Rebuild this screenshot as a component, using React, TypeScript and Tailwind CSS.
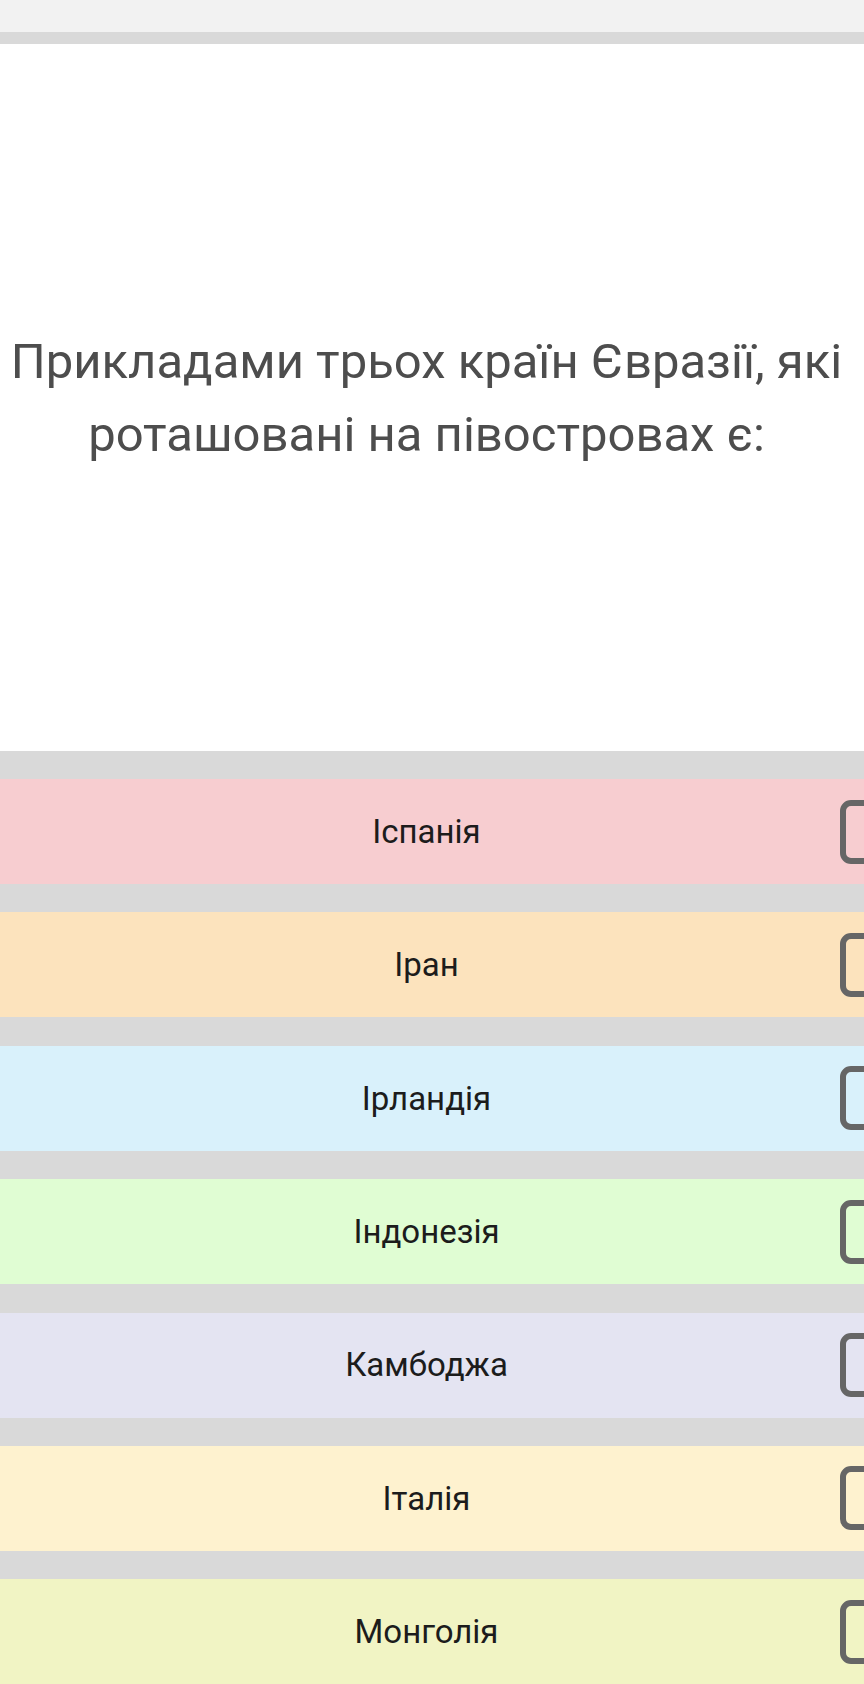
const options = [
  { label: "Іспанія", bg: "bg-[#f7cdd0]" },
  { label: "Іран", bg: "bg-[#fce3bd]" },
  { label: "Ірландія", bg: "bg-[#d9f1fb]" },
  { label: "Індонезія", bg: "bg-[#e0fdd3]" },
  { label: "Камбоджа", bg: "bg-[#e4e4f2]" },
  { label: "Італія", bg: "bg-[#fef2cf]" },
  { label: "Монголія", bg: "bg-[#f1f4c4]" },
]

function OptionRow({ label, bg }: { label: string; bg: string }) {
  return (
    <div className={`relative flex h-[105px] items-center justify-center pr-[11px] ${bg}`}>
      <span className="text-[33px] text-[#1c1c1c]">{label}</span>
      {/* checkbox sits half off the right edge */}
      <div className="absolute left-[840px] top-1/2 h-[64px] w-[64px] -translate-y-1/2 rounded-[11px] border-[6px] border-[#666666]" />
    </div>
  )
}

export default function App() {
  return (
    <div
      className="min-h-[1684px] w-[864px] overflow-hidden bg-[#d9d9d9]"
      style={{ fontFamily: "Roboto, 'Noto Sans', sans-serif" }}
    >
      <div className="h-[32px] bg-[#f2f2f2]" />
      <div className="h-[12px] bg-[#d9d9d9]" />
      <div className="flex h-[707px] items-center justify-center bg-white pr-[11px]">
        <p className="text-center text-[49px] leading-[73px] text-[#4d4d4d]">
          Прикладами трьох країн Євразії, які роташовані на півостровах є:
        </p>
      </div>
      <div className="flex flex-col gap-[28.4px] pt-[28px]">
        {options.map((o) => (
          <OptionRow key={o.label} label={o.label} bg={o.bg} />
        ))}
      </div>
    </div>
  )
}
